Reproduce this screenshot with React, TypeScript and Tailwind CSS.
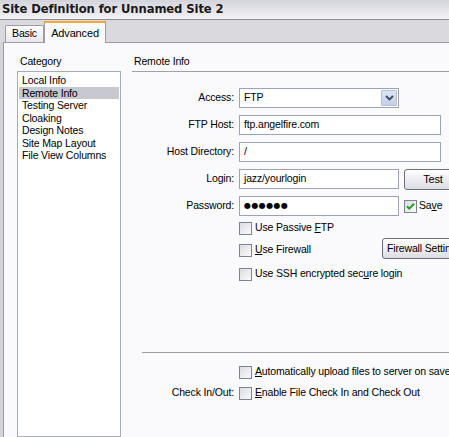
import React from "react";

const font = { fontFamily: '"Liberation Sans", Arial, sans-serif' };

function Check({ checked = false }: { checked?: boolean }) {
  return (
    <div className="relative w-[13px] h-[13px] shrink-0 border border-[#7c8494] bg-gradient-to-br from-[#dcdce2] to-[#fbfbfb]">
      {checked && (
        <svg className="absolute inset-0" width="11" height="11" viewBox="0 0 11 11">
          <path d="M2 5.2 L4.3 7.6 L9 2.8" stroke="#21a121" strokeWidth="2" fill="none" />
        </svg>
      )}
    </div>
  );
}

function Field({ w, children }: { w: string; children?: React.ReactNode }) {
  return (
    <div className={`${w} h-[20px] border border-[#98a4bc] bg-white flex items-center pl-[4px] text-black`}>
      {children}
    </div>
  );
}

function Row({ label, children }: { label?: string; children?: React.ReactNode }) {
  return (
    <div className="flex items-center h-[20px]">
      <div className="w-[104px] text-right pr-[2px] shrink-0">{label}</div>
      <div className="ml-[3px] flex items-center">{children}</div>
    </div>
  );
}

export default function App() {
  const items = [
    "Local Info",
    "Remote Info",
    "Testing Server",
    "Cloaking",
    "Design Notes",
    "Site Map Layout",
    "File View Columns",
  ];
  return (
    <div
      className="w-[449px] h-[437px] overflow-hidden flex flex-col bg-[#d4d4d8] text-[10.5px] tracking-[-0.15px] text-black"
      style={font}
    >
      {/* title */}
      <div className="h-[20px] shrink-0 border-b border-[#8c8c9c] bg-gradient-to-b from-[#d4d4dc] to-[#f2f2f6] pl-[2px] flex items-center">
        <span className="font-bold text-[#1a1a1a] whitespace-nowrap" style={{ fontFamily: '"DejaVu Sans", Verdana, sans-serif', fontSize: "11.6px", letterSpacing: "-0.1px" }}>
          Site Definition for Unnamed Site 2
        </span>
      </div>
      {/* tab band */}
      <div className="h-[22px] shrink-0 bg-[#dadade] flex items-end pl-[5px] relative z-10">
        <div className="h-[17px] w-[39px] border border-b-0 border-[#9c9ca8] bg-gradient-to-b from-[#fdfdfd] to-[#e8e8ec] flex items-center justify-center rounded-t-[2px] text-[10.5px]">
          Basic
        </div>
        <div className="h-[22px] w-[62px] -mb-px border-x border-[#9c9ca8] border-t-2 border-t-[#f3a832] bg-[#fafafc] flex items-center justify-center text-[11px]">
          Advanced
        </div>
      </div>
      {/* panel */}
      <div className="flex-1 ml-[3px] border-t border-l border-[#9c9ca8] bg-[#fafafd] flex">
        {/* left column */}
        <div className="w-[117px] shrink-0 pl-[13px] pt-[12px] flex flex-col">
          <div className="h-[12px] leading-[12px] pl-[3px]">Category</div>
          <div className="mt-[4px] flex-1 w-[104px] border border-[#a4acc4] bg-white pt-[2px]">
            {items.map((it) => (
              <div
                key={it}
                className={`mx-[1px] px-[3px] h-[12.5px] leading-[12.5px] whitespace-nowrap ${
                  it === "Remote Info" ? "bg-[#c8c8d0]" : ""
                }`}
              >
                {it}
              </div>
            ))}
          </div>
        </div>
        {/* right column */}
        <div className="flex-1 ml-[11px] pt-[12px] flex flex-col whitespace-nowrap">
          <div className="h-[12px] leading-[12px] pl-[2px]">Remote Info</div>
          <div className="mt-[4px] border-b border-[#a0a0aa]" />
          <div className="mt-[16px] flex flex-col gap-[7px]">
            <Row label="Access:">
              <div className="w-[160px] h-[20px] border border-[#98a4bc] bg-white flex items-center justify-between pl-[4px] pr-[1px]">
                <span>FTP</span>
                <div className="w-[16px] h-[16px] border border-[#b4c0dc] bg-gradient-to-b from-[#dde4f4] to-[#c4cee6] flex items-center justify-center rounded-[1px]">
                  <svg width="9" height="6" viewBox="0 0 9 6">
                    <path d="M1 1 L4.5 4.5 L8 1" stroke="#3c4a68" strokeWidth="1.8" fill="none" />
                  </svg>
                </div>
              </div>
            </Row>
            <Row label="FTP Host:">
              <Field w="w-[202px]">ftp.angelfire.com</Field>
            </Row>
            <Row label="Host Directory:">
              <Field w="w-[202px]">/</Field>
            </Row>
            <Row label="Login:">
              <Field w="w-[160px]">jazz/yourlogin</Field>
              <div className="ml-[5px] w-[58px] h-[21px] border border-[#6c6c7c] rounded-[3px] bg-gradient-to-b from-[#ffffff] to-[#dcdce4] flex items-center justify-center text-[11px]">
                Test
              </div>
            </Row>
            <Row label="Password:">
              <Field w="w-[160px]">
                <span className="text-[8px] tracking-[0.4px]" style={{ fontFamily: '"DejaVu Sans", sans-serif' }}>●●●●●●</span>
              </Field>
              <div className="ml-[5px] flex items-center gap-[2px]">
                <Check checked />
                <span>
                  Sa<span className="underline">v</span>e
                </span>
              </div>
            </Row>
          </div>
          <div className="ml-[107px] flex flex-col">
            <div className="mt-[5px] h-[14px] flex items-center gap-[3px]">
              <Check />
              <span>
                Use Passive <span className="underline">F</span>TP
              </span>
            </div>
            <div className="mt-[3px] h-[21px] flex items-end">
              <div className="w-[143px] flex items-center gap-[3px] mb-[1px]">
                <Check />
                <span>
                  <span className="underline">U</span>se Firewall
                </span>
              </div>
              <div className="w-[90px] h-[21px] border border-[#6c6c7c] rounded-[3px] bg-gradient-to-b from-[#ffffff] to-[#dcdce4] flex items-center pl-[4px]">
                Firewall Settings
              </div>
            </div>
            <div className="mt-[8px] h-[14px] flex items-center gap-[3px]">
              <Check />
              <span>
                Use SSH encrypted sec<span className="underline">u</span>re login
              </span>
            </div>
          </div>
          <div className="mt-[71px] ml-[10px] border-b border-[#a0a0aa]" />
          <div className="mt-[12px] ml-[107px] h-[14px] flex items-center gap-[3px]">
            <Check />
            <span>
              <span className="underline">A</span>utomatically upload files to server on save
            </span>
          </div>
          <div className="mt-[7px] h-[14px] flex items-center">
            <div className="w-[104px] text-right pr-[2px] shrink-0">Check In/Out:</div>
            <div className="ml-[3px] flex items-center gap-[3px]">
              <Check />
              <span>
                <span className="underline">E</span>nable File Check In and Check Out
              </span>
            </div>
          </div>
        </div>
      </div>
    </div>
  );
}
